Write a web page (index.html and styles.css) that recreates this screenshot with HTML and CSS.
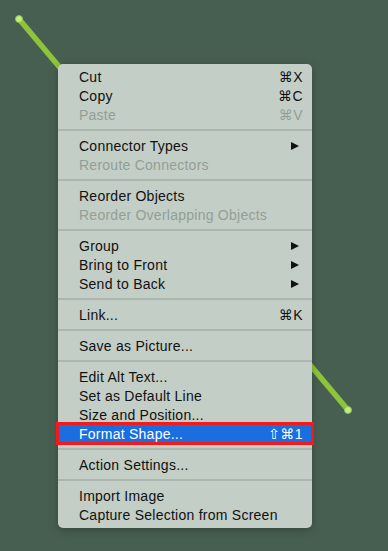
FILE: index.html
```html
<!DOCTYPE html>
<html lang="en">
<head>
  <meta charset="UTF-8">
  <title>Context Menu</title>
  <link rel="stylesheet" href="styles.css">
</head>
<body>

  <!-- selected connector on the slide canvas -->
  <svg class="connector" width="388" height="551" viewBox="0 0 388 551">
    <line x1="19" y1="19" x2="348" y2="410" stroke="#8fc43a" stroke-width="5.5"/>
    <circle cx="19" cy="19" r="3.5" fill="#c2ea8c" stroke="#8fc43a" stroke-width="1"/>
    <circle cx="348" cy="410" r="3.5" fill="#c2ea8c" stroke="#8fc43a" stroke-width="1"/>
  </svg>

  <div class="menu">
    <div class="item"><span>Cut</span><span class="key">⌘X</span></div>
    <div class="item"><span>Copy</span><span class="key">⌘C</span></div>
    <div class="item disabled"><span>Paste</span><span class="key">⌘V</span></div>
    <div class="sep"></div>
    <div class="item"><span>Connector Types</span><span class="arrow"></span></div>
    <div class="item disabled"><span>Reroute Connectors</span></div>
    <div class="sep"></div>
    <div class="item"><span>Reorder Objects</span></div>
    <div class="item disabled"><span>Reorder Overlapping Objects</span></div>
    <div class="sep"></div>
    <div class="item"><span>Group</span><span class="arrow"></span></div>
    <div class="item"><span>Bring to Front</span><span class="arrow"></span></div>
    <div class="item"><span>Send to Back</span><span class="arrow"></span></div>
    <div class="sep"></div>
    <div class="item"><span>Link...</span><span class="key">⌘K</span></div>
    <div class="sep"></div>
    <div class="item"><span>Save as Picture...</span></div>
    <div class="sep"></div>
    <div class="item"><span>Edit Alt Text...</span></div>
    <div class="item"><span>Set as Default Line</span></div>
    <div class="item"><span>Size and Position...</span></div>
    <div class="item active"><span>Format Shape...</span><span class="key">⇧⌘1</span></div>
    <div class="sep"></div>
    <div class="item"><span>Action Settings...</span></div>
    <div class="sep"></div>
    <div class="item"><span>Import Image</span></div>
    <div class="item"><span>Capture Selection from Screen</span></div>
  </div>

</body>
</html>
```

FILE: styles.css
```css
body {
  margin: 0;
  width: 388px;
  height: 551px;
  background-color: #475f51;
  font-family: "Liberation Sans", "DejaVu Sans", sans-serif;
  font-size: 14px;
  position: relative;
  overflow: hidden;
}

.connector {
  position: absolute;
  left: 0;
  top: 0;
}

.menu {
  position: absolute;
  left: 58px;
  top: 64px;
  width: 254px;
  padding: 3px 0 4px;
  background-color: #c3cec6;
  border-radius: 5px;
  box-shadow: 0 2px 8px rgba(0, 0, 0, 0.25);
}

.item {
  display: flex;
  justify-content: space-between;
  align-items: center;
  height: 19px;
  padding: 0 9px 0 21px;
  color: #111;
  white-space: nowrap;
  letter-spacing: 0.25px;
}

.item.disabled {
  color: #939e97;
}

.item.active {
  background-color: #1a6ee0;
  color: #fff;
  outline: 3px solid #f21a1a;
  outline-offset: -1px;
}

.key {
  font-size: 14px;
  letter-spacing: 0.5px;
}

.arrow {
  width: 0;
  height: 0;
  margin-right: 4px;
  border-top: 4.5px solid transparent;
  border-bottom: 4.5px solid transparent;
  border-left: 8px solid #111;
}

.sep {
  height: 2px;
  margin: 5px 0;
  background-color: #aab6ae;
}
```
